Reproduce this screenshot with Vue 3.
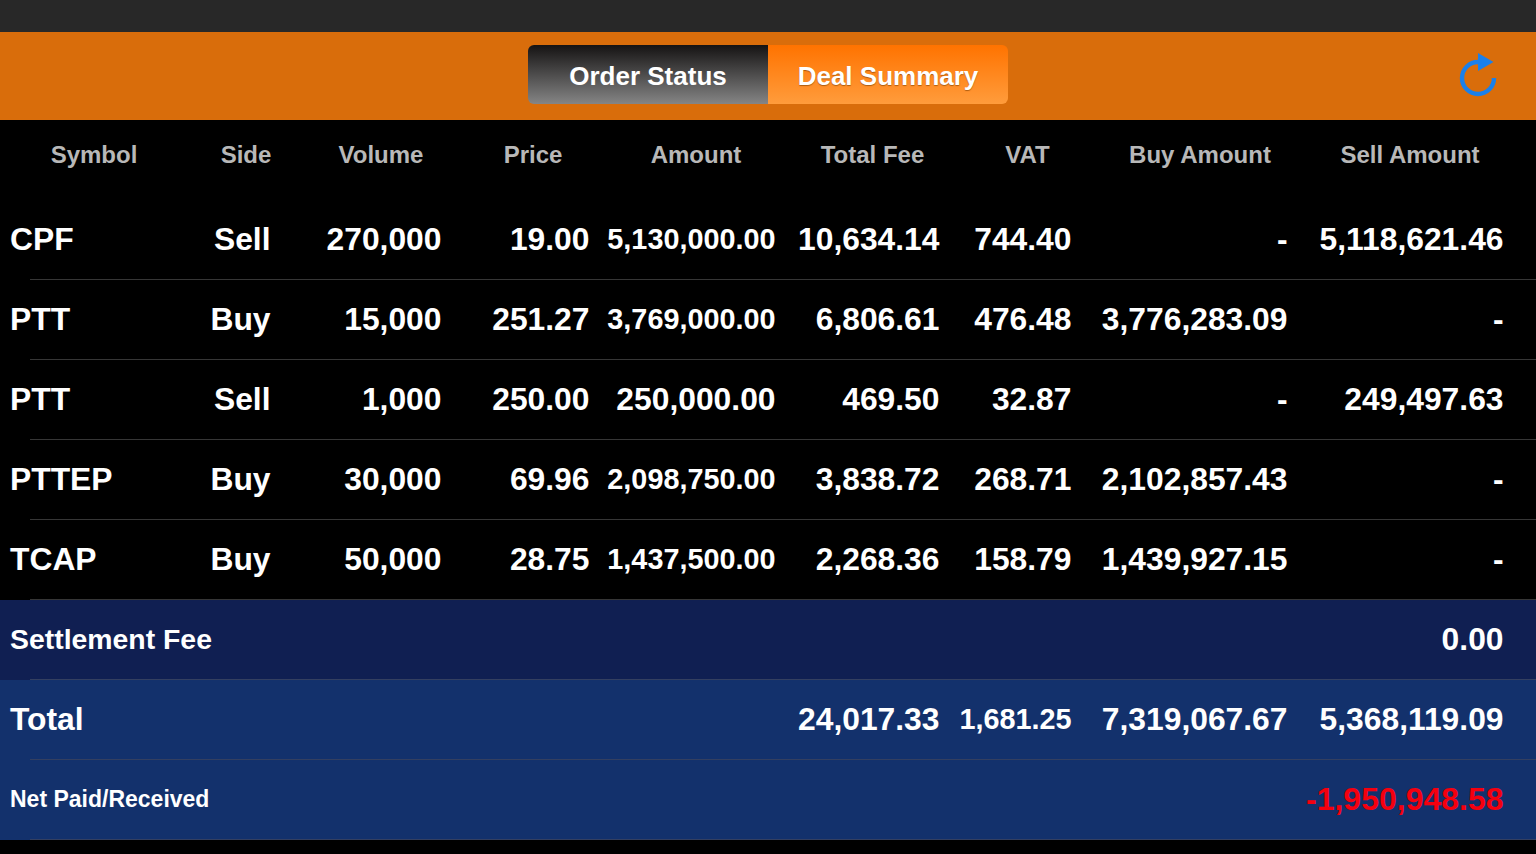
<template>
  <div class="screen">
    <div class="status-bar"></div>

    <div class="toolbar">
      <div class="segment">
        <div class="seg-btn seg-dark">Order Status</div>
        <div class="seg-btn seg-orange">Deal Summary</div>
      </div>
      <svg class="refresh" width="40" height="48" viewBox="0 0 40 48">
        <path d="M20 10 A16 16 0 1 0 36 26" fill="none" stroke="#1b80ea" stroke-width="4.4" />
        <polygon points="20,1 35.5,10 20,19" fill="#1b80ea" />
      </svg>
    </div>

    <div class="head-row">
      <div v-for="h in headers" :key="h">{{ h }}</div>
    </div>

    <div v-for="(r, i) in deals" :key="i" class="row">
      <div class="sym">{{ r.symbol }}</div>
      <div>{{ r.side }}</div>
      <div>{{ r.volume }}</div>
      <div>{{ r.price }}</div>
      <div :class="{ small: r.amount.length > 10 }">{{ r.amount }}</div>
      <div>{{ r.fee }}</div>
      <div>{{ r.vat }}</div>
      <div>{{ r.buy }}</div>
      <div>{{ r.sell }}</div>
    </div>

    <div class="row split-row fee-row">
      <div class="label">Settlement Fee</div>
      <div>0.00</div>
    </div>

    <div class="row total-row">
      <div class="sym">Total</div>
      <div></div>
      <div></div>
      <div></div>
      <div></div>
      <div>24,017.33</div>
      <div class="small">1,681.25</div>
      <div>7,319,067.67</div>
      <div>5,368,119.09</div>
    </div>

    <div class="row split-row total-row">
      <div class="net">Net Paid/Received</div>
      <div class="red">-1,950,948.58</div>
    </div>
  </div>
</template>

<script setup>
const headers = ['Symbol', 'Side', 'Volume', 'Price', 'Amount', 'Total Fee', 'VAT', 'Buy Amount', 'Sell Amount']

const deals = [
  { symbol: 'CPF', side: 'Sell', volume: '270,000', price: '19.00', amount: '5,130,000.00', fee: '10,634.14', vat: '744.40', buy: '-', sell: '5,118,621.46' },
  { symbol: 'PTT', side: 'Buy', volume: '15,000', price: '251.27', amount: '3,769,000.00', fee: '6,806.61', vat: '476.48', buy: '3,776,283.09', sell: '-' },
  { symbol: 'PTT', side: 'Sell', volume: '1,000', price: '250.00', amount: '250,000.00', fee: '469.50', vat: '32.87', buy: '-', sell: '249,497.63' },
  { symbol: 'PTTEP', side: 'Buy', volume: '30,000', price: '69.96', amount: '2,098,750.00', fee: '3,838.72', vat: '268.71', buy: '2,102,857.43', sell: '-' },
  { symbol: 'TCAP', side: 'Buy', volume: '50,000', price: '28.75', amount: '1,437,500.00', fee: '2,268.36', vat: '158.79', buy: '1,439,927.15', sell: '-' }
]
</script>

<style>
html, body { background: #000; }
</style>

<style scoped>
.screen { width: 1536px; height: 854px; background: #000; font-family: "Liberation Sans", Arial, sans-serif; font-weight: 700; color: #fff; overflow: hidden; }
.status-bar { height: 32px; background: #282828; }

.toolbar { height: 88px; background: #d96d0b; display: flex; justify-content: center; align-items: center; position: relative; }
.segment { display: flex; width: 480px; height: 59px; margin-top: -3px; border-radius: 6px; overflow: hidden; }
.seg-btn { flex: 1; display: flex; align-items: center; justify-content: center; padding-top: 3px; box-sizing: border-box; font-size: 26px; color: #fff; }
.seg-dark { background: linear-gradient(#151313, #858585); }
.seg-orange { background: linear-gradient(#ff7300, #ff9c3c); text-shadow: 0 1px 1px rgba(120, 60, 0, 0.6); }
.refresh { position: absolute; left: 1458px; top: 20px; }

.head-row { height: 80px; box-sizing: border-box; padding-bottom: 10px; display: grid; grid-template-columns: 188px 116px 154px 150px 176px 177px 133px 212px 208px 22px; align-items: center; text-align: center; font-size: 24px; color: #b8b8b8; }

.row { height: 80px; box-sizing: border-box; padding-bottom: 2px; display: grid; grid-template-columns: 178.5px 92px 171px 148px 186px 164px 132px 216px 216px; align-items: center; text-align: right; font-size: 31.8px; position: relative; }
.row::after { content: ""; position: absolute; left: 30px; right: 0; bottom: 0; height: 1px; background: #363636; }
.row > div { white-space: nowrap; }
.sym { text-align: left; padding-left: 10px; }
.small { font-size: 28.8px; }

.split-row { display: flex; justify-content: space-between; padding: 0 32.5px 2px 10px; }
.fee-row { background: #101f52; }
.total-row { background: #13316c; }
.total-row::after, .fee-row::after { background: #343f60; }
.label { font-size: 28.4px; }
.net { font-size: 23px; }
.red { color: #f4000f; font-size: 32px; }
</style>
